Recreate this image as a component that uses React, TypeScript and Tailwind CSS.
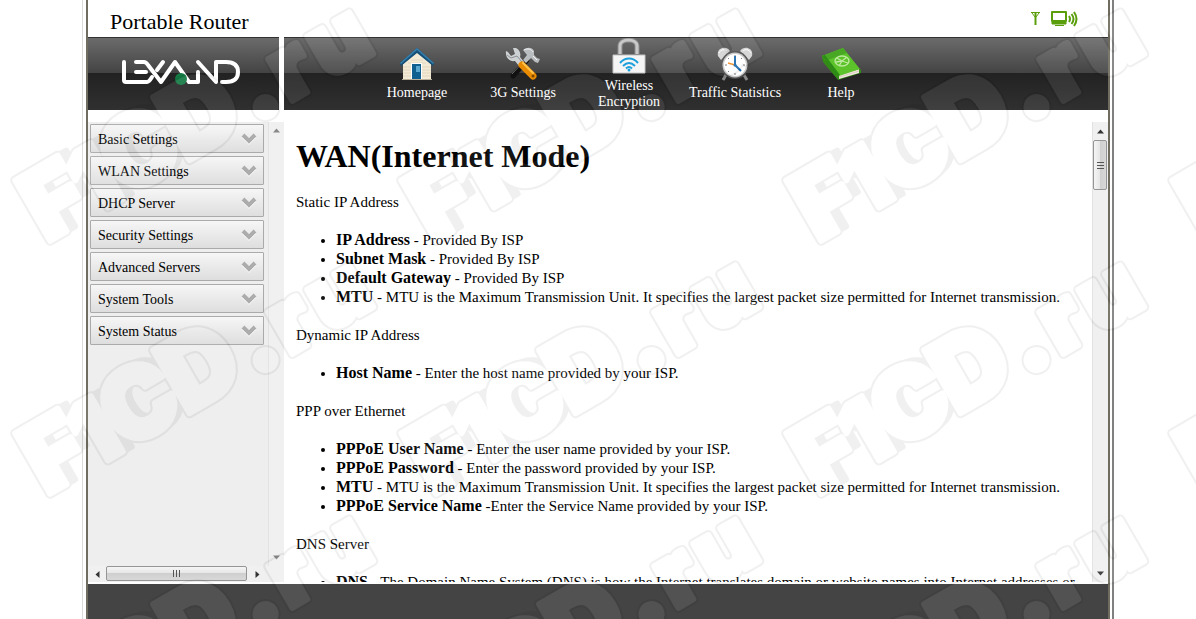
import type { ReactNode } from 'react';

interface NavItem {
  label: string;
  icon: ReactNode;
}

interface HelpEntry {
  term: string;
  text: string;
}

interface HelpSection {
  title: string;
  entries: HelpEntry[];
}

function HomeIcon() {
  return (
    <svg className="w-[36px] h-[34px]" viewBox="0 0 36 34">
      <path d="M4 17 18 4l14 13v16H4z" fill="#f3ead6" />
      <path d="M4 20h28M4 23h28M4 26h28M4 29h28M9 16h18M12 13h12" stroke="#ddd0b4" strokeWidth="0.7" />
      <path d="M18 1 1 16l1 3L18 6l16 13 1-3z" fill="#164f78" />
      <path d="M18 1 1 16l1 1L18 3l16 14 1-1z" fill="#3580ad" />
      <path d="M12 16h11v17H12z" fill="#fff" />
      <path d="M13 17h9v15h-9z" fill="#0f5f91" />
      <path d="M17 19h4v6h-4z" fill="#58a6ce" />
      <path d="M3 32h30v1H3z" fill="#b8ae98" />
    </svg>
  );
}

function ToolsIcon() {
  return (
    <svg className="w-[36px] h-[34px]" viewBox="0 0 36 34">
      <path d="M22 13 8 29" stroke="#111" strokeWidth="5" strokeLinecap="round" />
      <path d="M20 13 7 27" stroke="#666" strokeWidth="1" />
      <path d="M18 3c4-3 9-3 11 1v4l3 3 3 1-2 4-3-1-4-4-5 5-3-3 4-5z" fill="#b9bdc0" />
      <path d="M19 3c4-2 7-1 9 2M28 9l4 4" stroke="#f4f4f4" fill="none" />
      <path d="m1 4 2 1 3 4 4-2-2-6h3c4 2 5 6 4 9l4 5-5 4-4-5C5 15 0 11 1 4z" fill="#cfd2d4" />
      <path d="m2 8 4 3 6-2 5 6" stroke="#8d9194" fill="none" />
      <path d="m17 18 11 11" stroke="#e98b00" strokeWidth="7" strokeLinecap="round" />
      <path d="m18 16 10 10" stroke="#ffc44a" strokeWidth="2" strokeLinecap="round" />
      <circle cx="28" cy="29" r="1.500" fill="#7a4a00" />
    </svg>
  );
}

function LockIcon() {
  return (
    <svg className="w-[34px] h-[36px]" viewBox="0 0 34 36">
      <path d="M8 16V8c0-8 17-8 17 0v8" fill="none" stroke="#8b8b8b" strokeWidth="5" />
      <path d="M8 16V8c0-8 17-8 17 0v8" fill="none" stroke="#c9c9c9" strokeWidth="3" />
      <path d="M1 17h32v18H1z" fill="#f5f5f5" stroke="#c4c4c4" />
      <g fill="none" stroke="#1ba0dc" strokeWidth="2">
        <path d="M8 25c5-6 13-6 18 0" />
        <path d="M11 28c4-4 8-4 12 0" />
        <path d="M14 30.500c2-2 4-2 6 0" />
      </g>
      <circle cx="17" cy="32" r="1.500" fill="#1ba0dc" />
    </svg>
  );
}

function ClockIcon() {
  return (
    <svg className="w-[36px] h-[34px]" viewBox="0 0 36 34">
      <path d="m9 28-3 5M27 28l3 5" stroke="#888" strokeWidth="3" />
      <path d="M1 9c-2-8 8-11 12-5L4 13zM35 9c2-8-8-11-12-5l9 9z" fill="#d4d4d4" />
      <path d="M2 6c2-4 6-4 8-2M34 6c-2-4-6-4-8-2" stroke="#fff" fill="none" />
      <circle cx="18" cy="18" r="14" fill="#4c4c4c" />
      <circle cx="18" cy="18" r="12.500" fill="#c9c9c9" />
      <circle cx="18" cy="18" r="11" fill="#fff" />
      <path d="M18 8v2M18 26v2M8 18h2M26 18h2M11 11l1 1M25 11l-1 1M11 25l1-1" stroke="#777" />
      <path d="m18 18-7-2" stroke="#f08a24" strokeWidth="1.500" />
      <path d="M18 9v9l6 6" stroke="#1c69ad" strokeWidth="2" fill="none" />
      <circle cx="18" cy="18" r="1.500" fill="#1c69ad" />
    </svg>
  );
}

function BookIcon() {
  return (
    <svg className="w-[40px] h-[34px]" viewBox="0 0 40 34">
      <path d="m1 10 3 1 14 18 22-7v4l-23 7L2 15z" fill="#338a16" />
      <path d="m18 28 20-6v4l-20 6z" fill="#f1e6df" />
      <path d="m18 30 20-6" stroke="#cbb8ae" strokeWidth="0.600" />
      <path d="m1 9 21-8 17 21-21 7z" fill="#5cc32b" />
      <path d="m1 9 21-8 4 5L4 14z" fill="#48a824" />
      <path d="m1 9 3-1 15 20-3 1z" fill="#2d8d16" />
      <g fill="none" stroke="#bfeaa0" strokeWidth="1.300">
        <ellipse cx="21" cy="14" rx="7" ry="5" />
        <path d="m16 11 5 3 5-4M21 14l-3 5M21 14l6 2M15 15l6-1" />
      </g>
    </svg>
  );
}

function Logo() {
  return (
    <svg className="w-[120px] h-[28px]" viewBox="0 0 120 28" role="img" aria-label="Lexand">
      <g fill="none" stroke="#fff" strokeWidth="4" strokeLinecap="round" strokeLinejoin="round">
        <path d="M4 3v18q0 2 2 2h21q2 0 5-5" />
        <path d="M16 3h8q2 0 4 3l13 17L55 3l14 20h9V13" />
        <path d="M16 13h10M37 11l6-8M78 3l18 20V3h10q12 0 12 10t-12 10h-4" />
      </g>
      <circle cx="61" cy="20" r="6" fill="#137a43" />
    </svg>
  );
}

function StatusIcons() {
  return (
    <div className="flex gap-[11px] text-[#5a9e0c]">
      <svg className="w-[9px] h-[16px]" viewBox="0 0 9 16" fill="none" stroke="currentColor">
        <path d="M0 1.500h9M1 2l3 4M8 2 5 6" />
        <path d="M4.500 2v12" strokeWidth="2" />
      </svg>
      <svg className="w-[28px] h-[16px]" viewBox="0 0 28 16" fill="none" stroke="currentColor">
        <path d="M1 1h14v9H1z" strokeWidth="2" strokeLinejoin="round" />
        <path d="M1 11h14v2H1zM4 14.500h9" strokeWidth="1" fill="currentColor" />
        <path d="M18 5q2 3 0 6M20.500 3q4 5 0 10M23 1q5 7 0 14" strokeWidth="2" />
      </svg>
    </div>
  );
}

function Letters() {
  return (
    <>
      <text x="-1" y="-4" fontSize="96">F</text>
      <text x="52" y="-4" fontSize="88">1</text>
      <text x="89" y="-4" fontSize="98">C</text>
      <text x="160" y="-4" fontSize="100">D</text>
      <circle cx="257" cy="-12" r="10" />
      <text x="279" y="-4" fontSize="88">r</text>
      <text x="324" y="-4" fontSize="88">u</text>
    </>
  );
}

// One diagonal stamp; its baseline starts at the origin
function Stamp({ x, y }: { x: number; y: number }) {
  return (
    <g transform={`translate(${x} ${y}) rotate(-30)`}>
      <rect x="-50" y="-150" width="500" height="200" fill="#000" fillOpacity="0.06" mask="url(#outline)" />
      <rect x="-50" y="-150" width="500" height="200" fill="#fff" fillOpacity="0.08" mask="url(#body)" />
    </g>
  );
}

const stampColumns = [49, 435, 820, 1206];
const stampRows = [246, 499, 753];

function Watermark() {
  return (
    <svg
      className="absolute inset-0 w-full h-full pointer-events-none font-['Inter',sans-serif] font-black"
      strokeLinejoin="round"
      aria-hidden="true"
    >
      <mask id="body" maskUnits="userSpaceOnUse" x="-50" y="-150" width="500" height="200">
        <g fill="#fff" stroke="#fff" strokeWidth="6">
          <Letters />
        </g>
      </mask>
      <mask id="outline" maskUnits="userSpaceOnUse" x="-50" y="-150" width="500" height="200">
        {/* inner shade on the first three letters, then the rim around all of them */}
        <g fill="#fff" stroke="#fff" strokeWidth="6">
          <text x="9" y="-4" fontSize="96">F</text>
          <text x="62" y="-4" fontSize="88">1</text>
          <text x="97" y="-4" fontSize="98">C</text>
        </g>
        <g fill="#fff" stroke="#fff" strokeWidth="10">
          <Letters />
        </g>
        <g fill="#000" stroke="#000" strokeWidth="6">
          <Letters />
        </g>
      </mask>
      {stampRows.map((y) => stampColumns.map((x) => <Stamp key={`${x}-${y}`} x={x} y={y} />))}
    </svg>
  );
}

const navItems: NavItem[] = [
  { label: 'Homepage', icon: <HomeIcon /> },
  { label: '3G Settings', icon: <ToolsIcon /> },
  { label: 'Wireless Encryption', icon: <LockIcon /> },
  { label: 'Traffic Statistics', icon: <ClockIcon /> },
  { label: 'Help', icon: <BookIcon /> },
];

const menuItems = [
  'Basic Settings',
  'WLAN Settings',
  'DHCP Server',
  'Security Settings',
  'Advanced Servers',
  'System Tools',
  'System Status',
];

const mtuText =
  '- MTU is the Maximum Transmission Unit. It specifies the largest packet size permitted for Internet transmission.';

const sections: HelpSection[] = [
  {
    title: 'Static IP Address',
    entries: [
      { term: 'IP Address', text: '- Provided By ISP' },
      { term: 'Subnet Mask', text: '- Provided By ISP' },
      { term: 'Default Gateway', text: '- Provided By ISP' },
      { term: 'MTU', text: mtuText },
    ],
  },
  {
    title: 'Dynamic IP Address',
    entries: [{ term: 'Host Name', text: '- Enter the host name provided by your ISP.' }],
  },
  {
    title: 'PPP over Ethernet',
    entries: [
      { term: 'PPPoE User Name', text: '- Enter the user name provided by your ISP.' },
      { term: 'PPPoE Password', text: '- Enter the password provided by your ISP.' },
      { term: 'MTU', text: mtuText },
      { term: 'PPPoE Service Name', text: '-Enter the Service Name provided by your ISP.' },
    ],
  },
  {
    title: 'DNS Server',
    entries: [
      {
        term: 'DNS',
        text: '- The Domain Name System (DNS) is how the Internet translates domain or website names into Internet addresses or',
      },
    ],
  },
];

function Arrow({ d, label, className }: { d: string; label: string; className: string }) {
  return (
    <button type="button" aria-label={label} className={`flex items-center justify-center ${className}`}>
      <svg className="w-[7px] h-[7px]" viewBox="0 0 7 7" fill="currentColor">
        <path d={d} />
      </svg>
    </button>
  );
}

const up = 'M0 5.500 3.500 1.500 7 5.500z';
const down = 'M0 1.500h7L3.500 5.500z';
const left = 'M5.500 0v7L1.500 3.500z';
const right = 'M1.500 0v7l4-3.500z';

export default function App() {
  return (
    <div className="relative h-screen overflow-hidden bg-white font-['Liberation_Serif',serif] text-black">
      <div className="h-full max-w-[1032px] mx-auto pl-[3px] pr-[2px] border-l border-l-[#dcdcdc] border-r-2 border-r-[#808080]">
        <div className="h-full flex flex-col border-x-2 border-[#706d60]">
          {/* Title bar */}
          <div className="h-[37px] shrink-0 flex items-center justify-between pl-[22px] pr-[29px]">
            <div className="text-[22px] leading-6 pt-[6px]">Portable Router</div>
            <StatusIcons />
          </div>

          {/* Header */}
          <header className="h-[73px] shrink-0 flex gap-[5px]">
            <div className="w-[191px] shrink-0 pl-8 pb-[2px] flex items-center border-t border-[#333] bg-[linear-gradient(#6b6b6b,#444_48%,#222_49%,#303030)]">
              <Logo />
            </div>
            <nav className="flex-1 pl-20 flex border-t border-[#333] bg-[linear-gradient(#6b6b6b,#444_48%,#222_49%,#303030)]">
              {navItems.map((item) => (
                <a
                  key={item.label}
                  href="#"
                  className="w-[106px] px-1 flex flex-col items-center justify-center gap-1 text-center text-[14px] leading-4 text-white"
                >
                  {item.icon}
                  {item.label}
                </a>
              ))}
            </nav>
          </header>

          <div className="flex-1 min-h-0 flex pt-3 pb-[2px]">
            {/* Side menu */}
            <aside className="w-[196px] shrink-0 flex flex-col bg-[#eee]">
              <div className="flex-1 min-h-0 flex">
                <ul className="flex-1 pl-[2px] pr-1 pt-[2px] space-y-[3px]">
                  {menuItems.map((item) => (
                    <li key={item}>
                      <button
                        type="button"
                        className="w-full h-[29px] flex items-center justify-between pl-[7px] pr-[6px] border border-[#aaa] rounded-[1px] bg-linear-to-b from-[#f6f6f6] to-[#dedede] text-[14px]"
                      >
                        <span className="pt-[2px]">{item}</span>
                        <svg className="w-4 h-3" viewBox="0 0 16 12" fill="none" strokeWidth="4">
                          <path d="m2 3 6 6 6-6" stroke="#fff" />
                          <path d="m2 2 6 6 6-6" stroke="#acacac" />
                        </svg>
                      </button>
                    </li>
                  ))}
                </ul>
                <div className="w-4 flex flex-col justify-between border-l border-[#e2e2e2] bg-[#f0f0f0] text-[#888]">
                  <Arrow d={up} label="Scroll menu up" className="h-[17px]" />
                  <Arrow d={down} label="Scroll menu down" className="h-[17px]" />
                </div>
              </div>
              <div className="h-4 flex pr-4 bg-[#f0f0f0] text-[#333]">
                <Arrow d={left} label="Scroll menu left" className="w-[18px]" />
                <div className="w-[141px] h-[15px] flex items-center justify-center gap-[2px] border border-[#959595] rounded-[2px] bg-[linear-gradient(#f5f5f5,#e6e6e6_48%,#cfcfcf_50%,#d8d8d8)]">
                  <div className="w-px h-[7px] bg-[#555]" />
                  <div className="w-px h-[7px] bg-[#555]" />
                  <div className="w-px h-[7px] bg-[#555]" />
                </div>
                <Arrow d={right} label="Scroll menu right" className="flex-1" />
              </div>
            </aside>

            {/* Help text */}
            <main className="flex-1 min-w-0 overflow-hidden pl-3 pt-4 text-[15px] leading-[19px] space-y-[19px]">
              <h1 className="text-[32px] leading-9 font-bold">WAN(Internet Mode)</h1>
              {sections.map((section) => (
                <section key={section.title} className="space-y-[19px]">
                  <p>{section.title}</p>
                  <ul className="list-disc pl-10">
                    {section.entries.map((entry) => (
                      <li key={entry.term}>
                        <b className="text-[16px] leading-4">{entry.term}</b> {entry.text}
                      </li>
                    ))}
                  </ul>
                </section>
              ))}
            </main>

            <div className="w-4 shrink-0 flex flex-col border-l border-[#e2e2e2] bg-[#f0f0f0] text-[#333]">
              <Arrow d={up} label="Scroll up" className="h-[18px]" />
              <div className="w-[14px] h-[50px] flex flex-col items-center justify-center gap-[2px] border border-[#959595] rounded-[2px] bg-[linear-gradient(90deg,#f5f5f5,#e6e6e6_48%,#cfcfcf_50%,#d8d8d8)]">
                <div className="w-[7px] h-px bg-[#555]" />
                <div className="w-[7px] h-px bg-[#555]" />
                <div className="w-[7px] h-px bg-[#555]" />
              </div>
              <div className="flex-1" />
              <Arrow d={down} label="Scroll down" className="h-[17px]" />
            </div>
          </div>

          <footer className="h-[35px] shrink-0 bg-[#444]" />
        </div>
      </div>
      <Watermark />
    </div>
  );
}
